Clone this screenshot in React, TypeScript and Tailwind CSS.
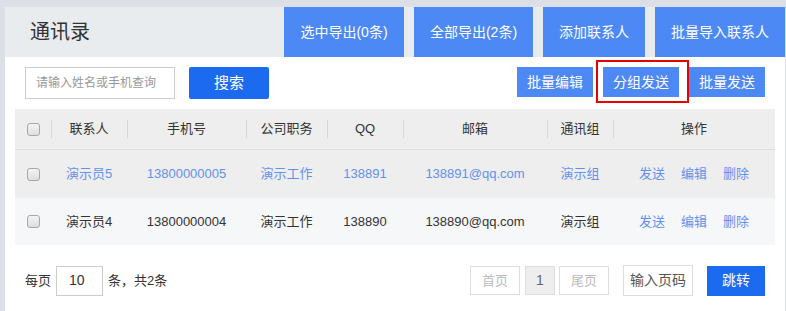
import React from "react";

const font = { fontFamily: '"Liberation Sans", "Noto Sans CJK SC", sans-serif' };

const cols = "grid grid-cols-[36px_76px_119px_81px_76px_144px_66px_162px]";

function Checkbox() {
  return (
    <span className="block w-[13px] h-[13px] rounded-[3px] border border-[#a8a8a8] bg-gradient-to-b from-[#f4f4f4] to-[#dedede]" />
  );
}

type Row = { name: string; phone: string; job: string; qq: string; mail: string; group: string };

const rows: Row[] = [
  { name: "演示员5", phone: "13800000005", job: "演示工作", qq: "138891", mail: "138891@qq.com", group: "演示组" },
  { name: "演示员4", phone: "13800000004", job: "演示工作", qq: "138890", mail: "138890@qq.com", group: "演示组" },
];

export default function App() {
  return (
    <div className="w-[786px] h-[311px] bg-[#dcdfe5] pt-[7px] pl-[5px] pr-[1px] overflow-hidden" style={font}>
      <div className="bg-white h-full relative">
        {/* header */}
        <div className="h-[50px] bg-[#e9ecef] flex items-center">
          <div className="pl-[25px] text-[20px] text-[#333]">通讯录</div>
          <div className="ml-auto flex h-full gap-[10px]">
            <button className="h-full w-[120px] bg-[#4d89f5] text-white text-[14px]">选中导出(0条)</button>
            <button className="h-full w-[119px] bg-[#4d89f5] text-white text-[14px]">全部导出(2条)</button>
            <button className="h-full w-[102px] bg-[#4d89f5] text-white text-[14px]">添加联系人</button>
            <button className="h-full w-[130px] bg-[#4d89f5] text-white text-[14px]">批量导入联系人</button>
          </div>
        </div>

        {/* toolbar */}
        <div className="flex items-start pt-[10px] pb-[10px] pl-[20px] pr-[20px] h-[52px]">
          <input
            className="w-[150px] h-[32px] border border-[#cccccc] pl-[10px] pr-[2px] text-[12px] text-[#333] placeholder:text-[#999] outline-none"
            placeholder="请输入姓名或手机查询"
          />
          <button className="ml-[14px] w-[80px] h-[32px] rounded-[2px] bg-[#1c6af0] text-white text-[15px]">搜索</button>
          <div className="ml-auto flex gap-[10px]">
            <button className="w-[76px] h-[30px] bg-[#4d89f5] text-white text-[14px]">批量编辑</button>
            <button className="w-[76px] h-[30px] bg-[#4d89f5] text-white text-[14px]">分组发送</button>
            <button className="w-[76px] h-[30px] bg-[#4d89f5] text-white text-[14px]">批量发送</button>
          </div>
        </div>
        <div className="absolute left-[591px] top-[53px] w-[93px] h-[43px] border-2 border-[#e60000] pointer-events-none" />

        {/* table */}
        <div className="mx-[10px] text-[13px]">
          <div className={`${cols} h-[41px] bg-[#eeeeee] border-b border-[#dddddd] items-center text-[#333]`}>
            <div className="flex justify-center"><Checkbox /></div>
            {["联系人", "手机号", "公司职务", "QQ", "邮箱", "通讯组", "操作"].map((h) => (
              <div key={h} className="relative text-center">
                <span className="absolute left-0 top-1/2 -translate-y-1/2 h-[18px] w-px bg-[#d6d6d6]" />
                {h}
              </div>
            ))}
          </div>
          {rows.map((r, i) => {
            const txt = i === 0 ? "text-[#6391ef]" : "text-[#333]";
            return (
              <div
                key={r.phone}
                className={`${cols} ${i === 0 ? "h-[48px] bg-[#eeeeee]" : "h-[47px] bg-[#f6f7f9]"} items-center ${txt}`}
              >
                <div className="flex justify-center"><Checkbox /></div>
                <div className="text-center">{r.name}</div>
                <div className="text-center">{r.phone}</div>
                <div className="text-center">{r.job}</div>
                <div className="text-center">{r.qq}</div>
                <div className="text-center">{r.mail}</div>
                <div className="text-center">{r.group}</div>
                <div className="flex justify-center gap-[16px] text-[#6391ef]">
                  <span>发送</span>
                  <span>编辑</span>
                  <span>删除</span>
                </div>
              </div>
            );
          })}
        </div>

        {/* pagination */}
        <div className="flex items-center mt-[20px] pl-[20px] pr-[20px] text-[13px] text-[#333]">
          <span>每页</span>
          <div className="ml-[5px] w-[47px] h-[30px] border border-[#cccccc] flex items-center pl-[12px] text-[14px]">10</div>
          <span className="ml-[5px]">条，共2条</span>
          <div className="ml-auto flex items-center">
            <div className="w-[50px] h-[29px] border border-[#dddddd] flex items-center justify-center text-[#bbb]">首页</div>
            <div className="ml-[5px] w-[30px] h-[29px] border border-[#dddddd] bg-[#eeeeee] flex items-center justify-center text-[#666] text-[14px]">1</div>
            <div className="ml-[4px] w-[50px] h-[29px] border border-[#dddddd] flex items-center justify-center text-[#bbb]">尾页</div>
            <div className="ml-[14px] w-[70px] h-[31px] border border-[#dddddd] flex items-center justify-center text-[#555] text-[14px]">输入页码</div>
            <button className="ml-[14px] w-[58px] h-[30px] bg-[#1c6af0] text-white text-[14px]">跳转</button>
          </div>
        </div>
      </div>
    </div>
  );
}
